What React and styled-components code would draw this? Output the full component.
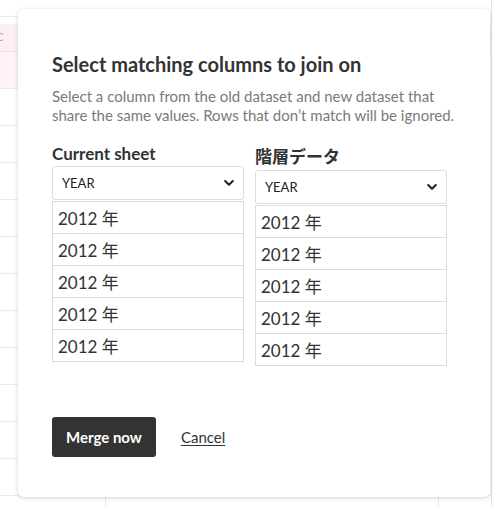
import React from "react";
import styled, { createGlobalStyle } from "styled-components";

const Global = createGlobalStyle`
  html, body { margin: 0; padding: 0; background: #fff; }
  body { font-family: Lato, "Noto Sans CJK JP", sans-serif; color: #333; }
  * { box-sizing: border-box; }
`;

const Page = styled.div`
  position: relative;
  width: 493px;
  height: 507px;
  overflow: hidden;
  display: flex;
`;

const Sheet = styled.div`
  width: 491px;
  height: 507px;
  display: flex;
  flex-direction: column;
  position: relative;
`;

const TopGap = styled.div`
  height: 17px;
  border-bottom: 1px solid #ececec;
  flex: none;
`;

const Spacer = styled.div`
  height: 7px;
  flex: none;
`;

const HeaderCell = styled.div`
  height: 28px;
  background: #fdeef1;
  border-bottom: 1px solid #f1dde2;
  font-size: 11px;
  color: #aaa;
  padding: 6px 0 0 0;
  flex: none;
  text-indent: -4px;
`;

const PinkRow = styled.div`
  height: 37px;
  background: #fff3f5;
  border-bottom: 1px solid #ececec;
  flex: none;
`;

const SheetRow = styled.div`
  height: 37px;
  border-bottom: 1px solid #ececec;
  flex: none;
`;

const VLines = styled.div`
  position: absolute;
  top: 17px;
  bottom: 0;
  left: 105px;
  width: 334px;
  border-left: 1px solid #e6e6e6;
  border-right: 1px solid #e6e6e6;
`;

const Side = styled.div`
  width: 2px;
  height: 507px;
  border-left: 1px solid #e4e4e4;
  display: flex;
  flex-direction: column;
  padding-top: 33px;
`;

const SideTick = styled.div`
  height: 37px;
  border-top: 1px solid #eee;
  flex: none;
`;

const Modal = styled.div`
  position: absolute;
  left: 18px;
  top: 9px;
  width: 472px;
  height: 488px;
  background: #fff;
  border-radius: 5px;
  box-shadow: 0 1px 4px rgba(0, 0, 0, 0.16), 0 0 1px rgba(0, 0, 0, 0.12);
  padding: 43px 34px 0 34px;
  display: flex;
  flex-direction: column;
`;

const Title = styled.h2`
  margin: 0;
  font-size: 20px;
  line-height: 24px;
  font-weight: 700;
  color: #333;
`;

const Desc = styled.p`
  margin: 11px 0 0 0;
  font-size: 15px;
  line-height: 19px;
  color: #7a7a7a;
`;

const Columns = styled.div`
  display: flex;
  gap: 11px;
  align-items: flex-start;
  margin-top: 18px;
`;

const Column = styled.div`
  width: 192px;
  display: flex;
  flex-direction: column;
`;

const Label = styled.div`
  font-size: 17px;
  font-weight: 700;
  color: #333;
  margin-bottom: 2px;
`;

const Select = styled.div`
  height: 34px;
  border: 1px solid #dcdcdc;
  border-radius: 3px;
  display: flex;
  align-items: center;
  justify-content: space-between;
  padding: 0 9px 0 9px;
  font-size: 13px;
  color: #222;
`;

const List = styled.div`
  border: 1px solid #dcdcdc;
  border-bottom: none;
  margin-top: 1px;
  display: flex;
  flex-direction: column;
`;

const Cell = styled.div`
  height: 32px;
  border-bottom: 1px solid #dcdcdc;
  display: flex;
  align-items: center;
  padding-left: 5px;
  font-size: 17px;
  color: #333;
`;

const Actions = styled.div`
  display: flex;
  align-items: center;
  gap: 25px;
  margin-top: auto;
  margin-bottom: 40px;
`;

const Primary = styled.button`
  height: 40px;
  padding: 0 14px;
  border: none;
  border-radius: 3px;
  background: #333;
  color: #fff;
  font-family: inherit;
  font-size: 15px;
  font-weight: 700;
`;

const LinkButton = styled.button`
  background: none;
  border: none;
  padding: 0;
  font-family: inherit;
  font-size: 15px;
  color: #333;
  text-decoration: underline;
  text-underline-offset: 2px;
`;

const Chevron = () => (
  <svg width="10" height="8" viewBox="0 0 10 8">
    <path d="M1.2 2 L5 5.8 L8.8 2" fill="none" stroke="#222" strokeWidth="2" strokeLinecap="round" strokeLinejoin="round" />
  </svg>
);

const rows = ["2012 年", "2012 年", "2012 年", "2012 年", "2012 年"];

function SelectColumn({ label }) {
  return (
    <Column>
      <Label>{label}</Label>
      <Select>
        <span>YEAR</span>
        <Chevron />
      </Select>
      <List>
        {rows.map((r, i) => (
          <Cell key={i}>{r}</Cell>
        ))}
      </List>
    </Column>
  );
}

export default function App() {
  return (
    <>
      <Global />
      <Page>
        <Sheet>
          <TopGap />
          <Spacer />
          <HeaderCell>C</HeaderCell>
          <PinkRow />
          {Array.from({ length: 11 }).map((_, i) => (
            <SheetRow key={i} />
          ))}
          <VLines />
        </Sheet>
        <Side>
          {Array.from({ length: 13 }).map((_, i) => (
            <SideTick key={i} />
          ))}
        </Side>
        <Modal>
          <Title>Select matching columns to join on</Title>
          <Desc>
            Select a column from the old dataset and new dataset that share the same values. Rows that don’t match will be ignored.
          </Desc>
          <Columns>
            <SelectColumn label="Current sheet" />
            <SelectColumn label="階層データ" />
          </Columns>
          <Actions>
            <Primary>Merge now</Primary>
            <LinkButton>Cancel</LinkButton>
          </Actions>
        </Modal>
      </Page>
    </>
  );
}
